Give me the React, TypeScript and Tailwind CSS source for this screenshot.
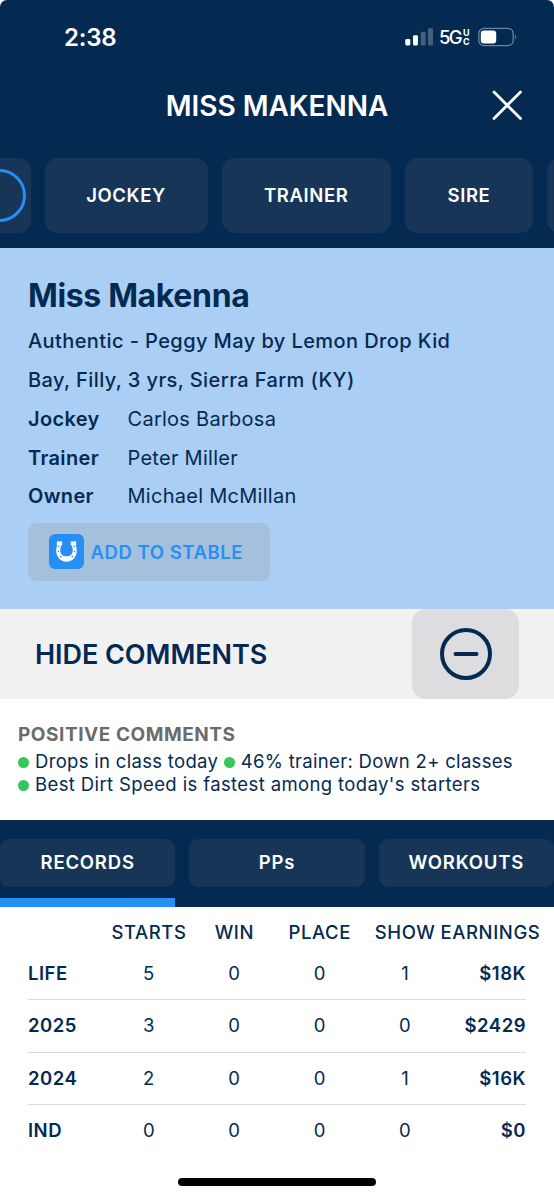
import React from 'react';

const HORSE_LINES = [
  'Authentic - Peggy May by Lemon Drop Kid',
  'Bay, Filly, 3 yrs, Sierra Farm (KY)',
];

const CONNECTIONS = [
  { label: 'Jockey', name: 'Carlos Barbosa' },
  { label: 'Trainer', name: 'Peter Miller' },
  { label: 'Owner', name: 'Michael McMillan' },
];

const RECORDS = [
  { label: 'LIFE', starts: 5, win: 0, place: 0, show: 1, earnings: '$18K' },
  { label: '2025', starts: 3, win: 0, place: 0, show: 0, earnings: '$2429' },
  { label: '2024', starts: 2, win: 0, place: 0, show: 1, earnings: '$16K' },
  { label: 'IND', starts: 0, win: 0, place: 0, show: 0, earnings: '$0' },
];

const StatusBar: React.FC = () => (
  <div className="flex h-[74px] items-center justify-between pl-[64px] pr-[37px]">
    <span className="pt-[1px] text-[24px] font-semibold tracking-[-0.2px]">2:38</span>
    <div className="flex items-center">
      <svg width="29" height="18" viewBox="0 0 29 18" fill="#fff">
        <rect x="0.3" y="11" width="5" height="6.4" rx="1.3" />
        <rect x="8" y="7.3" width="5" height="10.1" rx="1.3" />
        <rect x="15.7" y="3.8" width="5" height="13.6" rx="1.3" opacity="0.25" />
        <rect x="23" y="0.2" width="5" height="17.2" rx="1.3" opacity="0.25" />
      </svg>
      <span className="ml-[5px] w-[24px] pt-[2px] text-[18.5px] font-medium tracking-[-1.8px]">5G</span>
      <span className="flex w-[8px] flex-col pt-[1px] text-[9px] leading-[8.5px] font-bold">
        <span>U</span>
        <span>C</span>
      </span>
      <svg className="ml-[7px]" width="39" height="20" viewBox="0 0 39 20">
        <rect x="0.8" y="1.4" width="34.4" height="17.2" rx="5" fill="none" stroke="#6d83a0" strokeWidth="1.3" />
        <rect x="2.8" y="3.5" width="15.4" height="13" rx="3" fill="#fff" />
        <path d="M37 7.5c1.5.8 1.5 4.2 0 5z" fill="#6d83a0" />
      </svg>
    </div>
  </div>
);

const TitleBar: React.FC = () => (
  <div className="grid h-[70px] grid-cols-[80px_1fr_80px] items-start">
    <span />
    <h1 className="text-center text-[28px] leading-[64px] font-semibold tracking-[-0.02px]">MISS MAKENNA</h1>
    <button className="flex h-[62px] items-center pl-[16.5px]" aria-label="Close">
      <svg width="32" height="32" viewBox="0 0 32 32" stroke="#fff" strokeWidth="2.8" strokeLinecap="round">
        <path d="M3 3l26.5 26.5M29.5 3L3 29.5" />
      </svg>
    </button>
  </div>
);

const TopTabs: React.FC = () => (
  <nav className="flex h-[103.5px] gap-[14px] overflow-hidden pt-[14px] text-[18.5px] font-semibold tracking-[0.6px]">
    <button className="-ml-[89.5px] h-[75px] w-[120px] shrink-0 rounded-[13px] bg-[#173657] p-[5px]" aria-label="Horse">
      <span className="block h-[53px] rounded-full border-[3px] border-[#268ff5]" />
    </button>
    <button className="h-[75px] w-[163px] shrink-0 rounded-[13px] bg-[#173657]">JOCKEY</button>
    <button className="h-[75px] w-[169.5px] shrink-0 rounded-[13px] bg-[#173657]">TRAINER</button>
    <button className="h-[75px] w-[128px] shrink-0 rounded-[13px] bg-[#173657]">SIRE</button>
    <button className="h-[75px] w-[120px] shrink-0 rounded-[13px] bg-[#173657]" aria-label="Dam" />
  </nav>
);

const HorseshoeIcon: React.FC = () => (
  <svg width="35" height="35" viewBox="0 0 35 35">
    <rect width="35" height="35" rx="6" fill="#268ff5" />
    <path
      d="M8 7.2l5.2.4v3.2l-.9.8c-1.1 2.6-1.4 5.2-.7 7.2.8 2.3 3 3.6 5.9 3.6s5.1-1.3 5.9-3.6c.7-2 .4-4.6-.7-7.2l-.9-.8V7.6l5.2-.4.3 3.3-.6.7c1.2 3 1.5 6.2.6 9-1.4 4.5-5.2 7.5-9.8 7.5s-8.4-3-9.8-7.5c-.9-2.8-.6-6 .6-9l-.6-.7z"
      fill="#fff"
    />
    <g fill="#268ff5">
      <circle cx="10" cy="12.5" r="0.8" />
      <circle cx="9.2" cy="17.5" r="0.8" />
      <circle cx="11.7" cy="22.6" r="0.8" />
      <circle cx="25" cy="12.5" r="0.8" />
      <circle cx="25.8" cy="17.5" r="0.8" />
      <circle cx="23.3" cy="22.6" r="0.8" />
    </g>
  </svg>
);

const HorseInfo: React.FC = () => (
  <section className="h-[361.5px] bg-[#abcff4] px-[28px] pt-[21.6px] text-[20px] leading-[38.7px]">
    <h2 className="text-[32px] leading-[53.3px] font-bold tracking-[-0.35px]">Miss Makenna</h2>
    {HORSE_LINES.map((line) => (
      <p key={line} className="font-medium tracking-[0.41px]">{line}</p>
    ))}
    {CONNECTIONS.map(({ label, name }) => (
      <div key={label} className="grid grid-cols-[99.5px_1fr]">
        <span className="font-semibold tracking-[0.35px]">{label}</span>
        <span className="tracking-[0.27px]">{name}</span>
      </div>
    ))}
    <button className="mt-[7px] flex h-[58px] w-[242px] items-center rounded-[9px] bg-[#a4c0dc] pl-[20.5px] text-[18.5px] font-semibold tracking-[0.55px] text-[#268ff5]">
      <HorseshoeIcon />
      <span className="ml-[7px]">ADD TO STABLE</span>
    </button>
  </section>
);

const Dot: React.FC = () => (
  <span className="mr-[6px] inline-block h-[11px] w-[11px] rounded-full bg-[#34c759]" />
);

const Comments: React.FC = () => (
  <section>
    <div className="flex h-[89.5px] justify-between border-t-2 border-[#f5f5f6] bg-[#f1f1f2] pr-[35px] pl-[35px]">
      <span className="text-[27px] leading-[87px] font-semibold tracking-[-0.05px]">HIDE COMMENTS</span>
      <button className="-mt-[2px] flex h-[89.5px] w-[107px] items-center justify-center rounded-[14px] bg-[#dddddf]" aria-label="Collapse">
        <svg width="54" height="54" viewBox="0 0 54 54" fill="none" stroke="#042a52" strokeWidth="4" strokeLinecap="round">
          <circle cx="27" cy="27" r="24" />
          <path d="M16.5 27h21" />
        </svg>
      </button>
    </div>
    <div className="h-[121.5px] pt-[22.5px] pl-[18px]">
      <h3 className="text-[19px] leading-[27px] font-bold tracking-[0.55px] text-[#6b6b6b]">POSITIVE COMMENTS</h3>
      <p className="pt-[1.5px] text-[18.5px] leading-[23px] tracking-[0.31px] whitespace-nowrap">
        <Dot />Drops in class today <Dot />46% trainer: Down 2+ classes
      </p>
      <p className="text-[18.5px] leading-[23px] tracking-[0.38px] whitespace-nowrap">
        <Dot />Best Dirt Speed is fastest among today's starters
      </p>
    </div>
  </section>
);

const RecordTabs: React.FC = () => (
  <nav className="flex h-[86.5px] gap-[14px] bg-[#042a52] text-[18.5px] font-semibold tracking-[0.8px] text-white">
    {['RECORDS', 'PPs', 'WORKOUTS'].map((tab, i) => (
      <div key={tab} className="flex w-[175.3px] shrink-0 flex-col justify-between pt-[19px]">
        <button className="h-[48px] rounded-[9px] bg-[#173657]">{tab}</button>
        {i === 0 && <div className="h-[8.5px] bg-[#268ff5]" />}
      </div>
    ))}
  </nav>
);

const RecordsTable: React.FC = () => (
  <section className="px-[28px] text-[18.5px] tracking-[0.5px]">
    <div className="grid h-[41px] grid-cols-[78.3px_repeat(4,85.4px)_minmax(0,1fr)] items-center pt-[11px] text-center font-medium tracking-[0.6px]">
      <span />
      <span>STARTS</span>
      <span>WIN</span>
      <span>PLACE</span>
      <span>SHOW</span>
      <span className="-mr-[7px] flex justify-center">EARNINGS</span>
    </div>
    {RECORDS.map((row) => (
      <div
        key={row.label}
        className="grid h-[52.5px] grid-cols-[78.3px_repeat(4,85.4px)_minmax(0,1fr)] items-center border-b border-[#dcdcdc] pt-[1px] text-center last:border-b-0 last:pt-0"
      >
        <span className="text-left font-semibold">{row.label}</span>
        <span>{row.starts}</span>
        <span>{row.win}</span>
        <span>{row.place}</span>
        <span>{row.show}</span>
        <span className="text-right font-semibold">{row.earnings}</span>
      </div>
    ))}
  </section>
);

export default function App() {
  return (
    <div className="flex h-[1200px] w-[554px] flex-col overflow-hidden bg-white font-[Inter,sans-serif] text-[#042a52]">
      <header className="rounded-t-[7px] bg-[#042a52] text-white">
        <StatusBar />
        <TitleBar />
        <TopTabs />
      </header>
      <HorseInfo />
      <Comments />
      <RecordTabs />
      <RecordsTable />
      <div className="mx-auto mt-auto mb-[14px] h-[8.5px] w-[198px] shrink-0 rounded-full bg-black" />
    </div>
  );
}
